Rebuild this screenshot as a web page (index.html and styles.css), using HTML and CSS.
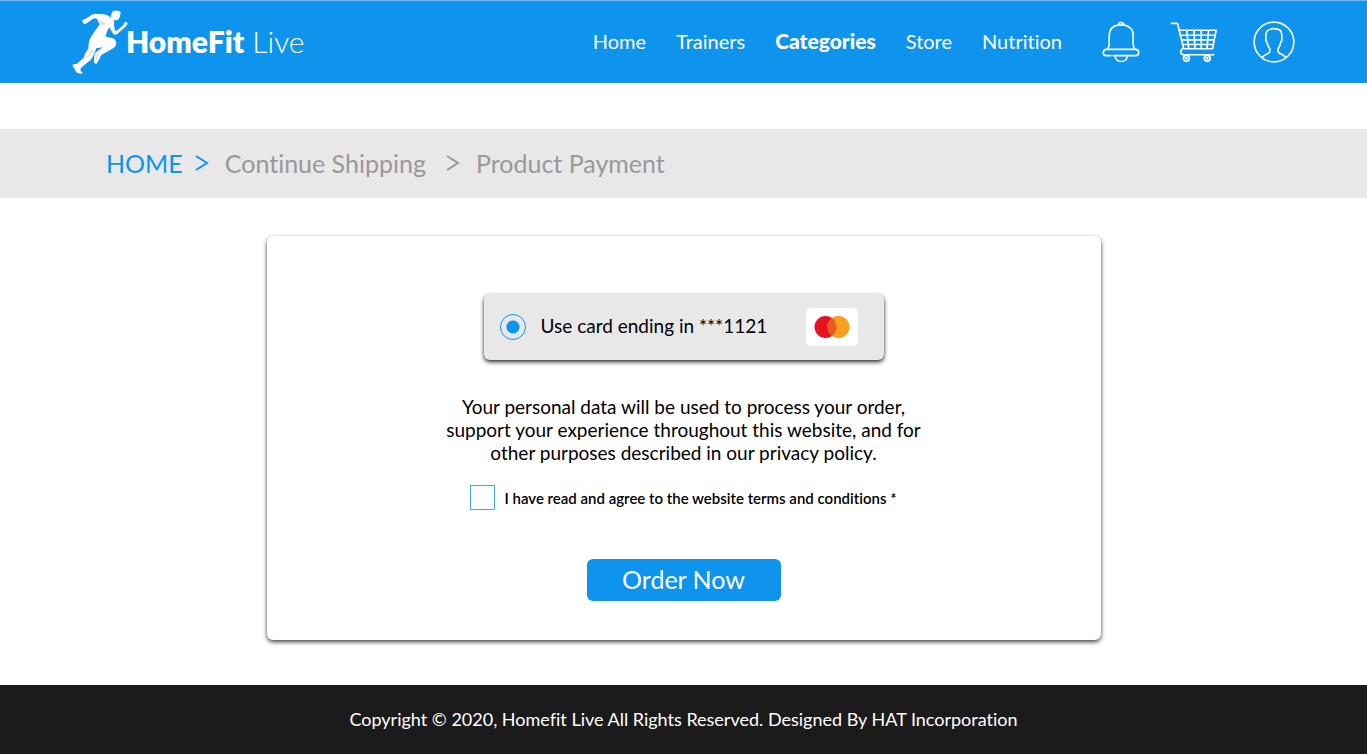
FILE: index.html
```html
<!DOCTYPE html>
<html lang="en">
<head>
<meta charset="utf-8">
<meta name="viewport" content="width=device-width, initial-scale=1">
<title>HomeFit Live - Product Payment</title>
<link rel="stylesheet" href="styles.css">
</head>
<body>
<header class="header">
  <a class="brand" href="#">
    <svg class="brand-mark" viewBox="6 4 168 192" aria-hidden="true">
      <path fill="#fff" d="M127 9Q133 5 141 6Q151 6 152 11L150 23Q149 30 143 33Q137 36 131 34Q134 40 132 48L135 66L140 66L160 50Q161 41 167 39L173 43Q172 50 166 54L142 76Q135 80 129 75L118 56Q111 66 107 80L110 85L128 89Q138 93 139 103Q139 113 131 118L95 138Q89 144 88 152L79 166L72 162L73 140Q74 134 79 130L98 116L79 119Q75 132 69 143Q64 155 54 160L33 177Q29 182 33 188L38 192L35 195L22 193Q15 189 13 179L8 172Q7 167 12 166L20 166L41 147Q44 135 51 126Q57 118 56 106Q57 93 66 80L89 47Q83 40 82 31L72 29L51 43Q46 48 41 45L36 37Q37 32 45 32L66 18Q73 14 84 16L102 17Q115 20 124 27Q122 22 124 17Z"/>
      <path d="M84 33L104 42L104 50L90 47Z" fill="#dce1e4"/>
      <path d="M61 121L74 123Q67 142 46 151Q58 137 61 121Z" fill="#e8ebed"/>
      <path d="M78 132L91 134Q83 146 79 158Q76 145 78 132Z" fill="#e3e7ea"/>
    </svg>
    <span class="brand-name"><strong>HomeFit</strong> Live</span>
  </a>
  <nav class="nav" aria-label="Main">
    <a href="#">Home</a>
    <a href="#">Trainers</a>
    <a class="active" href="#" aria-current="page">Categories</a>
    <a href="#">Store</a>
    <a href="#">Nutrition</a>
  </nav>
  <div class="actions">
    <button type="button" class="icon-button" aria-label="Notifications">
      <svg class="icon-bell" viewBox="37 31 116 127">
        <path d="M127 55Q132 62 132 75V100Q132 111 138 117H141Q149 118 149 126.500Q149 136 141 136H71M64 136H49Q41 136 41 126.500Q41 118 49 117H53Q59 111 59 100V75Q60 47 85 43H106Q117 45 123 52M87 42Q88 35 95.500 35Q103 35 104 42M54 117H137M77 138Q79 154 95.500 154Q112 154 114 138"/>
      </svg>
    </button>
    <button type="button" class="icon-button" aria-label="Cart">
      <svg class="icon-cart" viewBox="240 31 144 127">
        <path d="M244 38H262L281 115M266 59H379L368 115H278Q272 118 272 125Q272 133 280 133H372M270 74H376M274 88H373M278 102H371M290 59L296 115M312 59L315 115M334 59V115M356 59L351 115"/>
        <circle cx="289" cy="144" r="9"/><circle cx="352" cy="144" r="9"/>
        <circle cx="289" cy="144" r="2"/><circle cx="352" cy="144" r="2"/>
      </svg>
    </button>
    <button type="button" class="icon-button" aria-label="Account">
      <svg class="icon-user" viewBox="487 31 127 127">
        <circle cx="550.500" cy="94.500" r="60"/>
        <path d="M514 141Q524 133 535 128Q539 125 538 115Q531 107 529 95Q525 91 526 84Q525 70 529 62Q537 54 550 54Q564 54 571 61Q575 69 574 84Q575 91 571 95Q569 107 563 115Q562 125 566 128Q577 133 587 141"/>
      </svg>
    </button>
  </div>
</header>

<nav class="breadcrumb" aria-label="Breadcrumb">
  <a class="crumb-home" href="#">HOME</a>
  <svg class="chevron chevron-home" viewBox="0 0 14 18" aria-hidden="true"><path d="M1 2L12 9L1 16"/></svg>
  <a href="#">Continue Shipping</a>
  <svg class="chevron chevron-next" viewBox="0 0 14 18" aria-hidden="true"><path d="M1 2L12 9L1 16"/></svg>
  <span aria-current="page">Product Payment</span>
</nav>

<main class="main">
  <form class="payment">
    <label class="card-option">
      <input class="radio" type="radio" name="card" checked>
      <span class="card-text">Use card ending in ***1121</span>
      <svg class="card-logo" viewBox="0 0 52 38" role="img" aria-label="Mastercard">
        <rect width="52" height="38" rx="5" fill="#fff"/>
        <circle cx="19.500" cy="19" r="11" fill="#e61123"/>
        <circle cx="32.500" cy="19" r="11" fill="#f79f1f"/>
        <path d="M26 10.100A11 11 0 0 1 26 27.900A11 11 0 0 1 26 10.100Z" fill="#ea5b20"/>
      </svg>
    </label>
    <p class="privacy">Your personal data will be used to process your order,<br>support your experience throughout this website, and for<br>other purposes described in our privacy policy.</p>
    <label class="terms">
      <input class="checkbox" type="checkbox" name="terms">
      <span>I have read and agree to the website terms and conditions *</span>
    </label>
    <button class="order" type="submit">Order Now</button>
  </form>
</main>

<footer class="footer">Copyright © 2020, Homefit Live All Rights Reserved. Designed By HAT Incorporation</footer>
</body>
</html>
```
FILE: styles.css
```css
* {
  box-sizing: border-box;
}

body {
  display: flex;
  flex-direction: column;
  min-height: 100vh;
  margin: 0;
  background: #fff;
  color: #000;
  font-family: Lato, "Open Sans", sans-serif;
  font-variant-ligatures: none;
}

a {
  color: inherit;
  text-decoration: none;
}

.header {
  display: flex;
  align-items: center;
  padding: 0 72px;
  height: 83px;
  border-top: 1px solid #6ebcf2;
  background: #0e94ec;
  color: #fff;
}

.brand {
  display: flex;
  align-items: center;
  margin-right: auto;
}

.brand-mark {
  width: 56px;
  height: 64px;
  margin-right: -2px;
}

.brand-name {
  padding-bottom: 2px;
  font-size: 30px;
  font-weight: 300;
  line-height: 32px;
  white-space: pre;
}

.brand-name strong {
  font-weight: 800;
}

.nav {
  display: flex;
  align-items: baseline;
  gap: 30px;
  margin-right: 40px;
  padding-bottom: 2px;
  font-size: 20px;
  line-height: 28px;
}

.nav .active {
  font-size: 21px;
  font-weight: 900;
}

.actions {
  display: flex;
  align-items: center;
}

.icon-button {
  display: flex;
  margin-left: 30px;
  padding: 0;
  border: 0;
  background: none;
  cursor: pointer;
}

.icon-button + .icon-button + .icon-button {
  margin-left: 35px;
}

.icon-button:first-child {
  margin-left: 0;
}

.icon-button svg {
  height: 42px;
  fill: none;
  stroke: #fff;
  stroke-width: 5;
  stroke-linecap: round;
  stroke-linejoin: round;
}

.icon-bell {
  width: 38px;
}

.icon-cart {
  width: 48px;
}

.icon-user {
  width: 42px;
}

.breadcrumb {
  display: flex;
  align-items: center;
  height: 69px;
  margin-top: 46px;
  padding: 0 106px 2px;
  background: #e8e8e8;
  color: #999;
  font-size: 25px;
  line-height: 32px;
}

.crumb-home {
  color: #0e94ec;
}

.chevron {
  width: 14px;
  height: 18px;
  margin: 0 16px 0 12px;
  fill: none;
  stroke: #999;
  stroke-width: 2;
}

.chevron-home {
  stroke: #0e94ec;
}

.chevron-next {
  margin: 0 16px 0 20px;
}

.main {
  flex: 1;
  padding: 38px 24px 45px;
}

.payment {
  display: flex;
  flex-direction: column;
  align-items: center;
  max-width: 834px;
  margin: 0 auto;
  padding: 58px 24px 39px;
  border-radius: 6px;
  background: #fff;
  box-shadow: 0 2px 4px rgba(0, 0, 0, 0.75);
}

.card-option {
  display: flex;
  align-items: center;
  width: 100%;
  max-width: 400px;
  padding: 14px 26px 14px 16px;
  border-radius: 6px;
  background: #e8e8e8;
  box-shadow: 0 2px 4px rgba(0, 0, 0, 0.85);
  font-size: 19px;
  line-height: 24px;
}

.radio {
  appearance: none;
  width: 26px;
  height: 26px;
  margin: 0 15px 0 0;
  border: 1px solid #0e94ec;
  border-radius: 50%;
}

.radio:checked {
  background: radial-gradient(circle, #0e94ec 6px, transparent 7px);
}

.card-text {
  padding-bottom: 2px;
}

.card-logo {
  width: 52px;
  height: 38px;
  margin-left: auto;
}

.privacy {
  margin: 35px 0 21px;
  font-size: 19px;
  line-height: 23px;
  text-align: center;
}

.terms {
  display: flex;
  align-items: center;
  gap: 9px;
  font-size: 15px;
  font-weight: 600;
  line-height: 20px;
}

.checkbox {
  appearance: none;
  flex: none;
  width: 25px;
  height: 25px;
  margin: 0;
  border: 1px solid #3ea9f0;
}

.checkbox:checked {
  background: #0e94ec;
}

.order {
  width: 194px;
  height: 42px;
  margin-top: 49px;
  padding: 0 0 2px;
  border: 0;
  border-radius: 6px;
  background: #0e94ec;
  color: #fff;
  font-family: inherit;
  font-size: 25px;
  line-height: 32px;
  cursor: pointer;
}

.footer {
  padding: 22px 24px 23px;
  background: #1b1b1b;
  color: #fff;
  font-size: 18px;
  line-height: 24px;
  text-align: center;
}
```
